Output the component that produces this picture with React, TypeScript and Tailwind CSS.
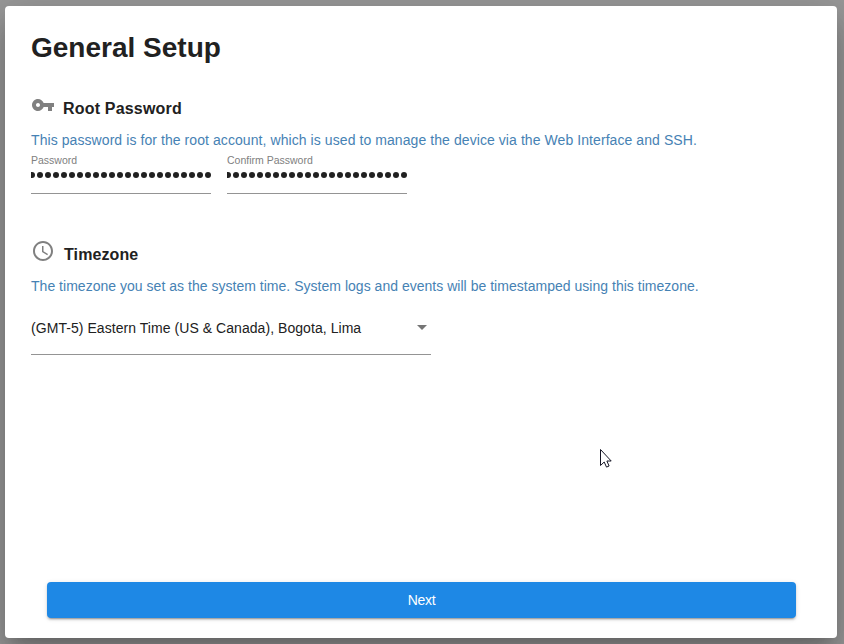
import React from "react";

const DOTS = Array.from({ length: 23 }, (_, i) => i);

function PasswordField({ label }: { label: string }) {
  return (
    <div className="w-[180px] border-b border-[#949494]">
      <div className="h-3 text-[10.5px] leading-3 text-[#808080]">{label}</div>
      <div className="mt-[3px] mb-[12px] flex h-3 items-center justify-end gap-[1.5px] overflow-hidden">
        {DOTS.map((i) => (
          <span key={i} className="size-[6.5px] shrink-0 rounded-full bg-[#212121]" />
        ))}
      </div>
    </div>
  );
}

export default function App() {
  return (
    <div className="h-[644px] w-[844px] overflow-hidden bg-[#999999] pt-[6px] pl-[5px] font-['Liberation_Sans',Arial,sans-serif] text-[#212121]">
      <main className="flex h-[632px] w-[832px] flex-col rounded-[4px] bg-white px-[26px] shadow-[0_11px_15px_-7px_rgba(0,0,0,0.2),0_24px_38px_3px_rgba(0,0,0,0.14),0_9px_46px_8px_rgba(0,0,0,0.12)]">
        <h1 className="mt-[26px] h-8 text-[28px] leading-8 font-bold">General Setup</h1>

        <section className="mt-[29px]">
          <div className="flex h-[30px] items-start">
            <svg className="size-6 shrink-0" viewBox="0 0 24 24" fill="#808080">
              <path d="M12.65 10C11.83 7.67 9.61 6 7 6c-3.31 0-6 2.69-6 6s2.69 6 6 6c2.61 0 4.83-1.67 5.65-4H17v4h4v-4h2v-4H12.65zM7 14c-1.1 0-2-.9-2-2s.9-2 2-2 2 .9 2 2-.9 2-2 2z" />
            </svg>
            <h2 className="mt-[6px] ml-2 text-base leading-5 font-bold tracking-[0.19px]">Root Password</h2>
          </div>
          <p className="mt-[9px] h-4 text-sm leading-4 tracking-[0.075px] whitespace-nowrap text-[#4682b4]">
            This password is for the root account, which is used to manage the device via the Web Interface and SSH.
          </p>
          <div className="mt-[6px] flex gap-4">
            <PasswordField label="Password" />
            <PasswordField label="Confirm Password" />
          </div>
        </section>

        <section className="mt-[45px]">
          <div className="flex h-[30px] items-start">
            <svg className="size-6 shrink-0" viewBox="0 0 24 24" fill="#808080">
              <path d="M11.99 2C6.47 2 2 6.48 2 12s4.47 10 9.99 10C17.52 22 22 17.52 22 12S17.52 2 11.99 2zM12 20c-4.42 0-8-3.58-8-8s3.58-8 8-8 8 3.58 8 8-3.58 8-8 8zm.5-13H11v6l5.25 3.15.75-1.23-4.5-2.67z" />
            </svg>
            <h2 className="mt-[6px] ml-[9px] text-base leading-5 font-bold tracking-[0.1px]">Timezone</h2>
          </div>
          <p className="mt-[9px] h-4 text-sm leading-4 tracking-[0.023px] whitespace-nowrap text-[#4682b4]">
            The timezone you set as the system time. System logs and events will be timestamped using this timezone.
          </p>
          <div className="mt-[26px] flex h-[35px] w-[400px] items-start justify-between border-b border-[#949494] pr-1">
            <span className="text-sm leading-4 tracking-[0.055px]">(GMT-5) Eastern Time (US &amp; Canada), Bogota, Lima</span>
            <svg className="mt-[5px] h-[5px] w-[10px]" viewBox="0 0 10 5" fill="#757575">
              <path d="M0 0h10L5 5z" />
            </svg>
          </div>
        </section>

        <button className="mt-auto mb-5 ml-4 h-9 w-[749px] shrink-0 rounded-[4px] bg-[#1e88e5] text-sm tracking-[-0.3px] text-white shadow-[0_3px_1px_-2px_rgba(0,0,0,0.2),0_2px_2px_0_rgba(0,0,0,0.14),0_1px_5px_0_rgba(0,0,0,0.12)]">
          Next
        </button>
      </main>
      <svg className="absolute top-[448px] left-[600px] h-[21px] w-[13px]" viewBox="0 0 13 21" fill="white" stroke="#151525" strokeWidth="1">
        <path d="M.5 1.5v16l3.7-3.5 2.3 5.1 2.6-1.1-2.2-5h4.3z" />
      </svg>
    </div>
  );
}
